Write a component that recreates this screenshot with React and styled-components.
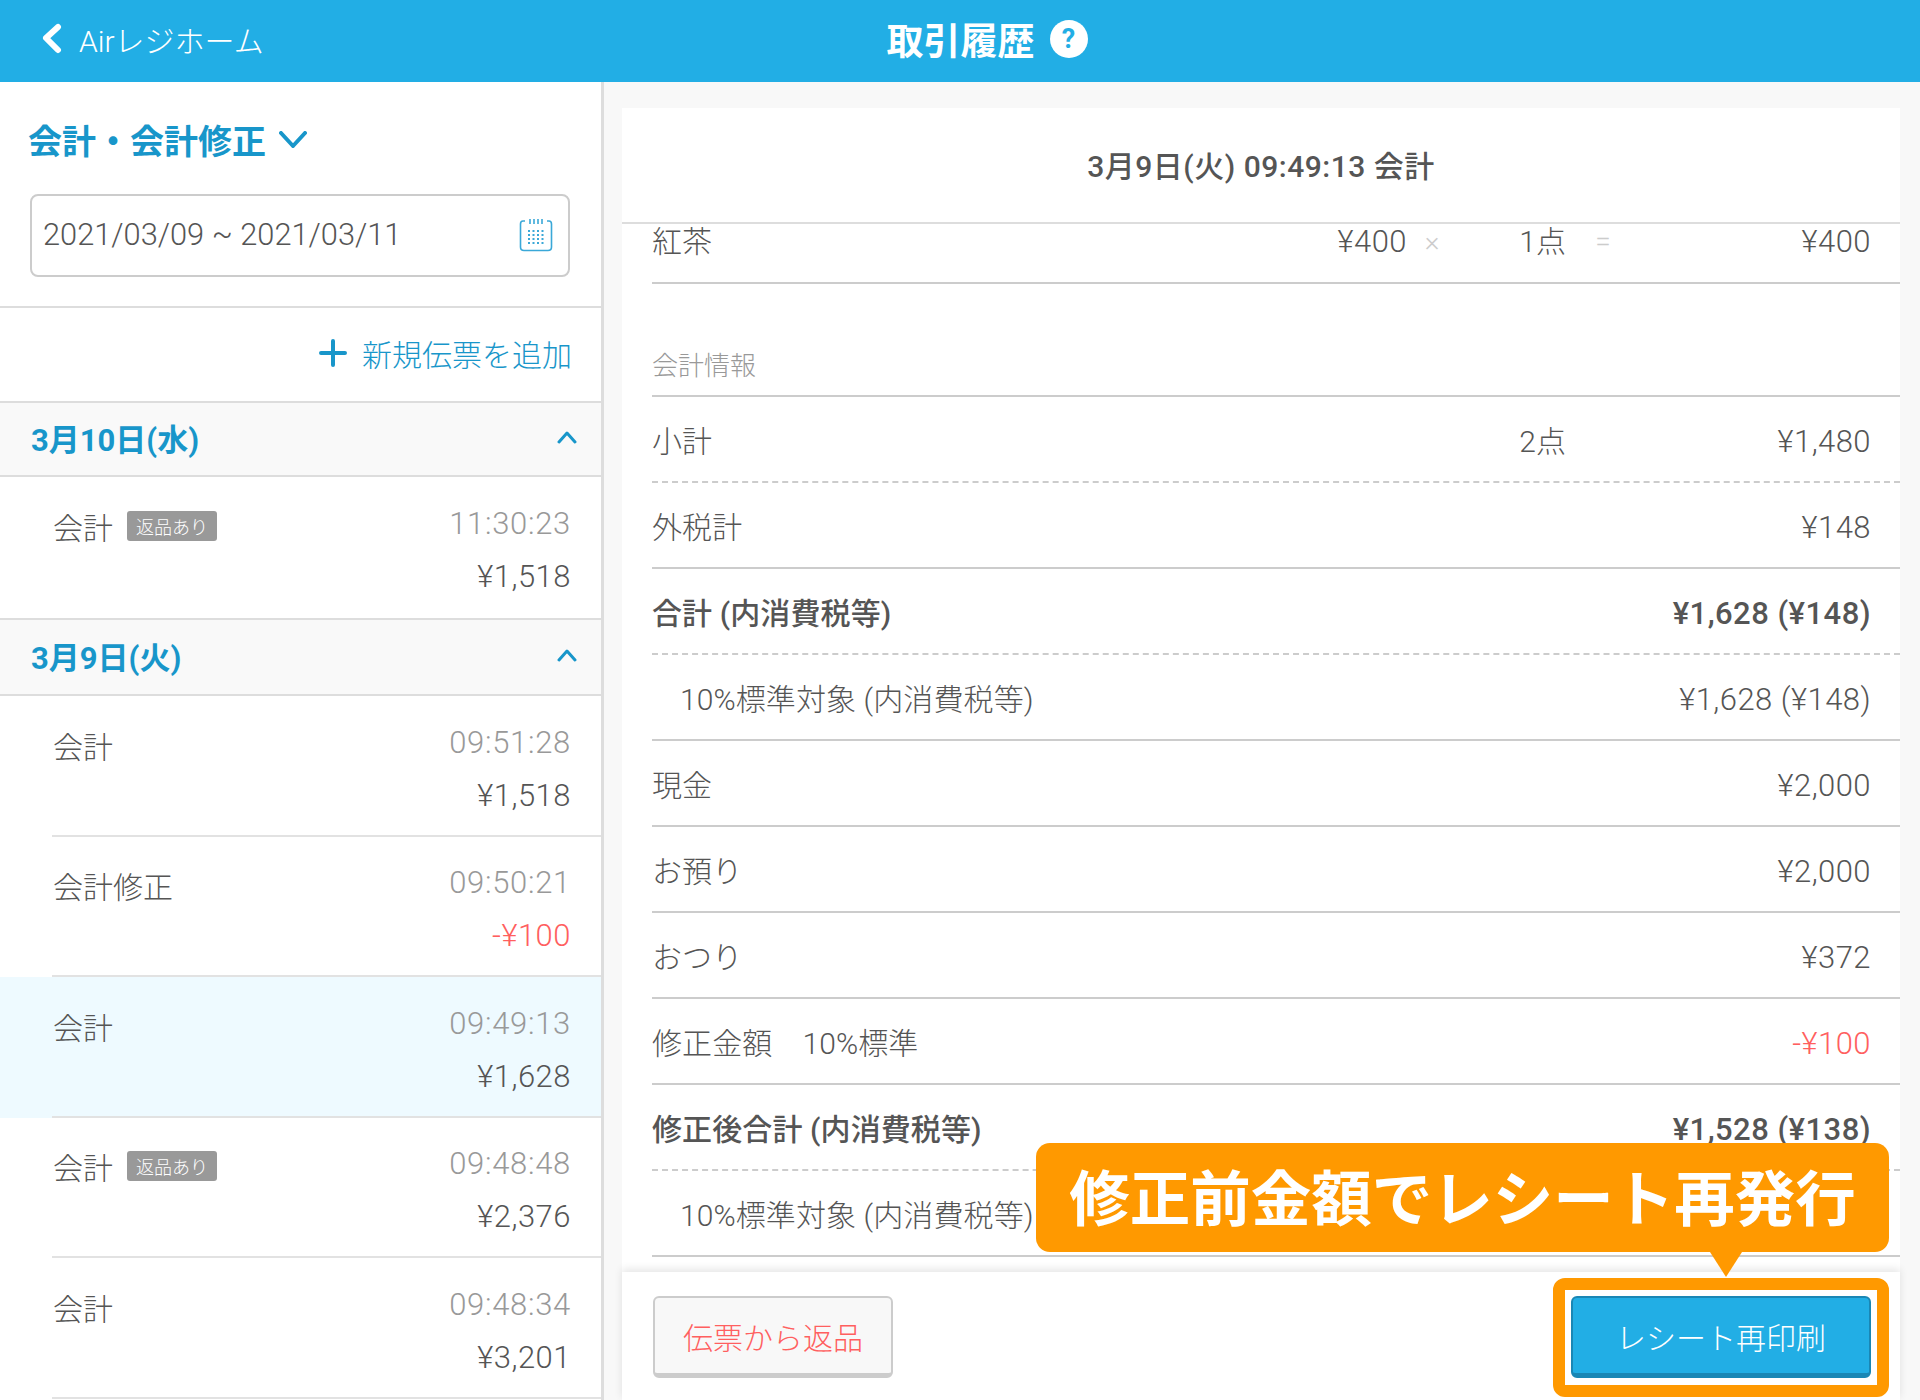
import React from 'react';
import styled, { createGlobalStyle } from 'styled-components';

const GlobalStyle = createGlobalStyle`
  html, body {
    margin: 0;
    padding: 0;
    background: #fff;
  }
  * {
    box-sizing: border-box;
  }
  body {
    font-family: Roboto, "Noto Sans CJK JP", sans-serif;
    font-weight: 300;
    color: #555;
  }
`;

const Page = styled.div`
  position: relative;
  width: 1920px;
  height: 1400px;
  display: flex;
  flex-direction: column;
  overflow: hidden;
`;

const Header = styled.header`
  flex: 0 0 82px;
  background: #22aee5;
  color: #fff;
  display: grid;
  grid-template-columns: 1fr auto 1fr;
  align-items: center;
  padding: 0 0 5px 42px;
`;

const BackLink = styled.a`
  display: flex;
  align-items: center;
  gap: 17px;
  font-size: 30px;
`;

const HeaderTitle = styled.h1`
  margin: 0 0 0 12px;
  display: flex;
  align-items: center;
  gap: 15px;
  font-size: 37px;
  font-weight: 700;
`;

const Help = styled.span`
  width: 38px;
  height: 38px;
  border-radius: 50%;
  background: #fff;
  color: #22aee5;
  font-size: 27px;
  font-weight: 700;
  display: flex;
  align-items: center;
  justify-content: center;
`;

const Body = styled.div`
  flex: 1;
  min-height: 0;
  display: flex;
`;

const Sidebar = styled.aside`
  flex: 0 0 604px;
  border-right: 3px solid #ddd;
  overflow: hidden;
`;

const FilterBlock = styled.div`
  height: 226px;
  padding: 37px 31px 0 30px;
  border-bottom: 2px solid #ddd;
`;

const FilterTitle = styled.div`
  display: flex;
  align-items: center;
  gap: 13px;
  height: 40px;
  margin-left: -2px;
  font-size: 34px;
  font-weight: 700;
  color: #1896ca;
`;

const DateField = styled.div`
  margin-top: 35px;
  height: 83px;
  border: 2px solid #ccc;
  border-radius: 8px;
  display: flex;
  align-items: center;
  justify-content: space-between;
  padding: 0 15px 2px 11px;
  font-size: 30.8px;
`;

const AddRow = styled.div`
  height: 93px;
  padding: 0 29px 4px 0;
  display: flex;
  align-items: center;
  justify-content: flex-end;
  gap: 15px;
  font-size: 30px;
  color: #1896ca;
`;

const DayHeader = styled.div`
  height: ${(p) => p.$height}px;
  background: #f9f9f9;
  border-top: 2px solid #ddd;
  border-bottom: 2px solid #ddd;
  padding: 0 24px 3px 31px;
  display: flex;
  align-items: center;
  justify-content: space-between;
  font-size: 31px;
  font-weight: 700;
  color: #1896ca;
`;

const Entry = styled.div`
  height: ${(p) => p.$height || 140.5}px;
  padding: 22px 30px 0 53px;
  position: relative;
  background: ${(p) => (p.$selected ? '#eefaff' : 'transparent')};
  display: grid;
  grid-template-columns: 1fr auto;
  grid-template-rows: 48px 55px;
  align-items: center;
  font-size: 30px;

  &::after {
    content: '';
    display: ${(p) => (p.$last ? 'none' : 'block')};
    position: absolute;
    left: 52px;
    right: 0;
    bottom: 0;
    border-bottom: 2px solid #e2e2e2;
  }
`;

const EntryTitle = styled.div`
  display: flex;
  align-items: center;
  gap: 14px;
  padding-top: 5px;
`;

const Badge = styled.span`
  width: 90px;
  height: 30px;
  border-radius: 3px;
  background: #999;
  color: #fff;
  font-size: 18px;
  display: flex;
  align-items: center;
  justify-content: center;
`;

const EntryTime = styled.div`
  color: #999;
  text-align: right;
  font-size: 31px;
  letter-spacing: 0.7px;
`;

const EntryAmount = styled.div`
  grid-column: 2;
  padding-top: 3px;
  text-align: right;
  font-size: 31px;
  letter-spacing: 0.5px;
  color: ${(p) => (p.$negative ? '#ff5f5f' : '#555')};
`;

const Main = styled.main`
  flex: 1;
  min-width: 0;
  background: #f8f8f8;
  padding: 26px 20px 0 18px;
`;

const Card = styled.section`
  height: 100%;
  background: #fff;
  display: flex;
  flex-direction: column;
`;

const CardTitle = styled.div`
  flex: 0 0 116px;
  padding-bottom: 2px;
  border-bottom: 2px solid #ddd;
  display: flex;
  align-items: center;
  justify-content: center;
  font-size: 30px;
  font-weight: 500;
  letter-spacing: 0.5px;
`;

const Scroller = styled.div`
  flex: 1;
  min-height: 0;
  overflow: hidden;
  padding-left: 30px;
  font-size: 30px;
`;

const ItemRow = styled.div`
  height: 60px;
  padding-right: 29px;
  line-height: 36px;
  border-bottom: 2px solid #ccc;
  display: grid;
  grid-template-columns: 1fr auto 50px 109px 74px 231px;
  align-items: start;
`;

const Operator = styled.span`
  color: #ccc;
  font-size: 28px;
  text-align: center;
`;

const Right = styled.span`
  text-align: right;
`;

const SectionLabel = styled.div`
  height: 113px;
  padding-bottom: 13px;
  border-bottom: 2px solid #ccc;
  display: flex;
  align-items: flex-end;
  font-size: 26px;
  color: #999;
`;

const SummaryRow = styled.div`
  height: 86px;
  padding: 0 29px 0 ${(p) => (p.$sub ? 28 : 0)}px;
  border-bottom: 2px ${(p) => (p.$dashed ? 'dashed' : 'solid')} #ccc;
  display: grid;
  grid-template-columns: 1fr 120px 305px;
  align-items: center;
  font-weight: ${(p) => (p.$bold ? 500 : 300)};
  letter-spacing: 0.1px;

  > :last-child {
    grid-column: 3;
  }
`;

const Amount = styled.span`
  padding-top: ${(p) => p.$top ?? 5}px;
  font-size: 31px;
  text-align: right;
  white-space: nowrap;
  letter-spacing: 0.45px;
  color: ${(p) => (p.$negative ? '#ff5f5f' : 'inherit')};
`;

const Footer = styled.div`
  flex: 0 0 128px;
  position: relative;
  background: #fff;
  box-shadow: 0 -3px 8px rgba(0, 0, 0, 0.1);
  padding: 24px 29px 0 31px;
  display: flex;
  justify-content: space-between;
  align-items: flex-start;
`;

const Button = styled.button`
  height: 82px;
  border-radius: 6px;
  border: 2px solid ${(p) => (p.$primary ? '#1a87b5' : '#ccc')};
  border-bottom-width: 5px;
  background: ${(p) => (p.$primary ? '#22aee5' : '#f8f8f8')};
  color: ${(p) => (p.$primary ? '#fff' : '#ff5f5f')};
  width: ${(p) => p.$width}px;
  font-family: inherit;
  font-size: 30px;
  font-weight: 300;
  padding: 0;
`;

const Callout = styled.div`
  position: absolute;
  left: 1036px;
  top: 1143px;
  width: 853px;
  height: 109px;
  padding-bottom: 6px;
  border-radius: 14px;
  background: #ff9900;
  color: #fff;
  font-size: 60.5px;
  font-weight: 700;
  display: flex;
  align-items: center;
  justify-content: center;
  white-space: nowrap;

  &::after {
    content: '';
    position: absolute;
    left: 674px;
    top: 109px;
    border-left: 16px solid transparent;
    border-right: 16px solid transparent;
    border-top: 25px solid #ff9900;
  }
`;

const Highlight = styled.div`
  position: absolute;
  left: 1553px;
  top: 1278px;
  width: 336px;
  height: 119px;
  border: 12px solid #ff9900;
  border-radius: 12px;
`;

const Chevron = ({ points, width, height, color, stroke }) => (
  <svg width={width} height={height} viewBox={`0 0 ${width} ${height}`} fill="none">
    <polyline
      points={points}
      stroke={color}
      strokeWidth={stroke}
      strokeLinecap="round"
      strokeLinejoin="round"
    />
  </svg>
);

const CalendarIcon = () => (
  <svg width="34" height="34" viewBox="0 0 34 34" fill="none" stroke="#3aa8d8">
    <path d="M6 3H4Q1.500 3 1.500 6V29Q1.500 32.500 5 32.500H29Q32.500 32.500 32.500 29V6Q32.500 3 30 3H28" strokeWidth="1.600" />
    <path d="M11 1V6M15 1V6M19 1V6M23 1V6" strokeWidth="1.600" />
    <path d="M9 13H26M9 17H26M9 21H26M9 25H26" strokeWidth="2" strokeDasharray="2 2.500" />
  </svg>
);

const entries = [
  { title: '会計', time: '09:51:28', amount: '¥1,518' },
  { title: '会計修正', time: '09:50:21', amount: '-¥100', negative: true },
  { title: '会計', time: '09:49:13', amount: '¥1,628', selected: true },
  { title: '会計', time: '09:48:48', amount: '¥2,376', returned: true },
  { title: '会計', time: '09:48:34', amount: '¥3,201' },
];

const summary = [
  { label: '小計', count: '2点', amount: '¥1,480', dashed: true },
  { label: '外税計', amount: '¥148' },
  { label: '合計 (内消費税等)', amount: '¥1,628 (¥148)', bold: true, dashed: true },
  { label: '10%標準対象 (内消費税等)', amount: '¥1,628 (¥148)', sub: true },
  { label: '現金', amount: '¥2,000' },
  { label: 'お預り', amount: '¥2,000' },
  { label: 'おつり', amount: '¥372' },
  { label: '修正金額　10%標準', amount: '-¥100', negative: true },
  { label: '修正後合計 (内消費税等)', amount: '¥1,528 (¥138)', bold: true, dashed: true },
  { label: '10%標準対象 (内消費税等)', amount: '¥1,528 (¥138)', sub: true },
];

const SalesEntry = ({ title, time, amount, negative, selected, returned, height, last }) => (
  <Entry $selected={selected} $height={height} $last={last}>
    <EntryTitle>
      {title}
      {returned && <Badge>返品あり</Badge>}
    </EntryTitle>
    <EntryTime>{time}</EntryTime>
    <EntryAmount $negative={negative}>{amount}</EntryAmount>
  </Entry>
);

const App = () => (
  <Page>
    <GlobalStyle />
    <Header>
      <BackLink>
        <Chevron points="16,4 4,15 16,27" width="20" height="31" color="#fff" stroke="6" />
        Airレジホーム
      </BackLink>
      <HeaderTitle>
        取引履歴
        <Help>?</Help>
      </HeaderTitle>
    </Header>
    <Body>
      <Sidebar>
        <FilterBlock>
          <FilterTitle>
            会計・会計修正
            <Chevron points="2,2 14,15 26,2" width="28" height="17" color="#1896ca" stroke="4" />
          </FilterTitle>
          <DateField>
            2021/03/09 ~ 2021/03/11
            <CalendarIcon />
          </DateField>
        </FilterBlock>
        <AddRow>
          <svg width="28" height="28" viewBox="0 0 28 28" stroke="#1896ca" strokeWidth="4" strokeLinecap="round">
            <path d="M14 2V26M2 14H26" />
          </svg>
          新規伝票を追加
        </AddRow>
        <DayHeader $height={76}>
          3月10日(水)
          <Chevron points="2,11 10,2 18,11" width="20" height="13" color="#1896ca" stroke="3" />
        </DayHeader>
        <SalesEntry title="会計" time="11:30:23" amount="¥1,518" returned height={141} last />
        <DayHeader $height={78}>
          3月9日(火)
          <Chevron points="2,11 10,2 18,11" width="20" height="13" color="#1896ca" stroke="3" />
        </DayHeader>
        {entries.map((entry) => (
          <SalesEntry key={entry.time} {...entry} />
        ))}
      </Sidebar>
      <Main>
        <Card>
          <CardTitle>3月9日(火) 09:49:13 会計</CardTitle>
          <Scroller>
            <ItemRow>
              <span>紅茶</span>
              <Amount $top={0}>¥400</Amount>
              <Operator>×</Operator>
              <Right>1点</Right>
              <Operator>=</Operator>
              <Amount $top={0}>¥400</Amount>
            </ItemRow>
            <SectionLabel>会計情報</SectionLabel>
            {summary.map((row, i) => (
              <SummaryRow key={i} $dashed={row.dashed} $bold={row.bold} $sub={row.sub}>
                <span>{row.label}</span>
                {row.count && <Right>{row.count}</Right>}
                <Amount $negative={row.negative}>{row.amount}</Amount>
              </SummaryRow>
            ))}
          </Scroller>
          <Footer>
            <Button $width={240}>伝票から返品</Button>
            <Button $primary $width={300}>レシート再印刷</Button>
          </Footer>
        </Card>
      </Main>
    </Body>
    <Callout>修正前金額でレシート再発行</Callout>
    <Highlight />
  </Page>
);

export default App;
